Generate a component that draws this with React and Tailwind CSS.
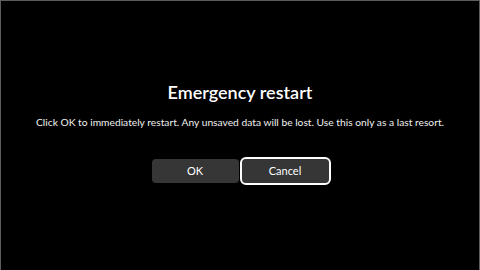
import React from "react";

const App = () => {
  return (
    <div
      className="w-[480px] h-[270px] bg-black text-white border-l border-r border-t border-[#5c5c5c] flex flex-col items-center pt-[79px]"
      style={{ fontFamily: 'Lato, "Open Sans", sans-serif' }}
    >
      <h1 className="text-[18px] leading-6 font-semibold">Emergency restart</h1>
      <p className="mt-[10px] text-[10.25px] leading-4 text-[#f0f0f0] whitespace-nowrap">
        Click OK to immediately restart. Any unsaved data will be lost. Use this only as a last resort.
      </p>
      <div className="mt-[29px] flex gap-[3px]">
        <button className="w-[87px] h-6 rounded-[4px] bg-[#363636] text-[11px] text-white">
          OK
        </button>
        <button className="w-[87px] h-6 rounded-[4px] bg-[#363636] text-[11px] text-white outline-2 outline-white outline-offset-0">
          Cancel
        </button>
      </div>
    </div>
  );
};

export default App;
